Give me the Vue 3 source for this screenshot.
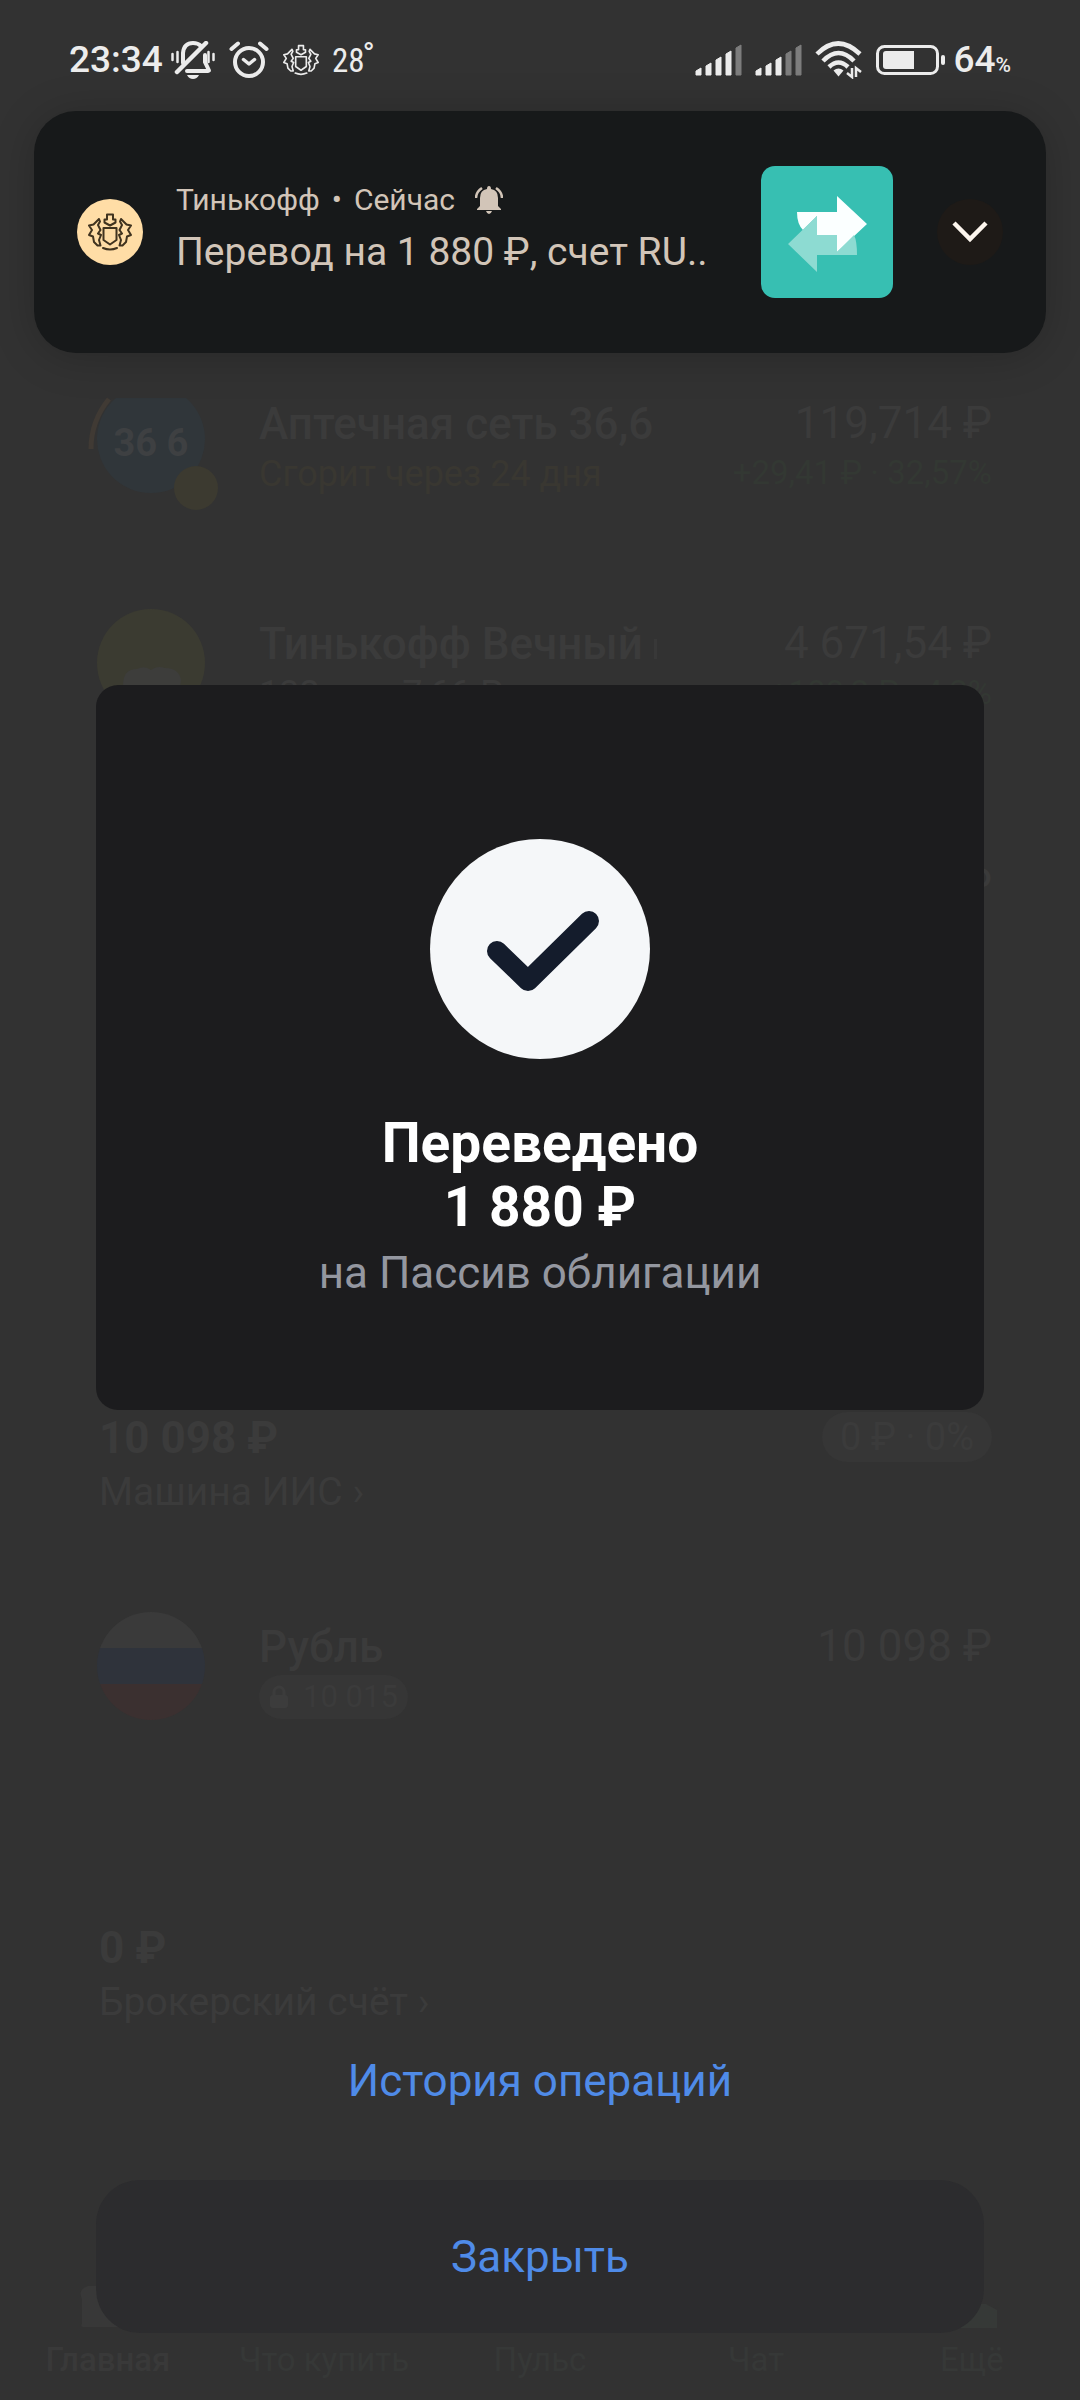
<script setup>
const tabs = ['Главная', 'Что купить', 'Пульс', 'Чат', 'Ещё']
const networks = [
  { id: 'sim1', level: 4 },
  { id: 'sim2', level: 3 },
]
const bars = [8, 13, 19, 25, 31]
</script>

<template>
  <div class="screen">
    <svg class="defs" aria-hidden="true">
      <symbol id="emblem" viewBox="0 0 44 38">
        <g fill="none" stroke="currentColor" stroke-width="2" stroke-linejoin="round" stroke-linecap="round">
          <path d="M19 1.500h6v5h2.500v3L22 12.500 16.500 9.500v-3H19z" />
          <path d="M15.500 15h13v12L22 31.500 15.500 27z" />
          <path d="M15 35q7 3 14 0" />
          <path d="M11 6L5.500 11.500 1 12.500 4 17 1 22l4 1.500L6 29l3.500 3.500h3L11 27l2-5-3-1.500 2.500-3.500L10 12l2-3.500z" />
          <path d="M33 6l5.500 5.500 4.500 1-3 4.500 3 5-4 1.500-1 5.500-3.500 3.500h-3L33 27l-2-5 3-1.500-2.500-3.500L34 12l-2-3.500z" />
        </g>
      </symbol>
    </svg>

    <main class="accounts">
      <article class="row">
        <div class="logo pharmacy">
          <svg width="124" height="108" viewBox="0 0 124 108" aria-hidden="true">
            <path d="M19 9h70a54 54 0 1 1-70 0z" fill="#30363a" />
            <path d="M12 10Q-6 32-6 60" fill="none" stroke="#403a34" stroke-width="5" />
            <circle cx="99" cy="99" r="22" fill="#3c3a30" />
          </svg>
          <span class="logo-text">36 6</span>
        </div>
        <div class="info">
          <h3>Аптечная сеть 36,6</h3>
          <p class="warn">Сгорит через 24 дня</p>
        </div>
        <div class="value">
          <p class="price">119,714 ₽</p>
          <p class="gain">+29,41 ₽ · 32,57%</p>
        </div>
      </article>

      <article class="row">
        <svg class="logo" width="108" height="108" viewBox="0 0 108 108" aria-hidden="true">
          <circle cx="54" cy="54" r="54" fill="#3b3b31" />
          <path d="M26 76q0-16 14-16 8-4 14 1 6-5 14-2 14 0 16 12 0 12-12 20l-4 14H48l-8-12q-12-6-14-17z" fill="#3d3d3b" />
        </svg>
        <div class="info">
          <h3>Тинькофф Вечный <span class="cut"></span></h3>
          <p>132 шт · 7,66 ₽</p>
        </div>
        <div class="value">
          <p class="price">4 671,54 ₽</p>
          <p class="gain">+188,2 ₽ · 4,2%</p>
        </div>
      </article>

      <p class="partial">₽</p>

      <header class="account first">
        <div>
          <h2>10 098 ₽</h2>
          <a href="#iis">Машина ИИС ›</a>
        </div>
        <span class="pill">0 ₽ · 0%</span>
      </header>

      <article class="row currency">
        <svg class="logo" width="108" height="108" viewBox="0 0 108 108" aria-hidden="true">
          <clipPath id="round"><circle cx="54" cy="54" r="54" /></clipPath>
          <g clip-path="url(#round)">
            <path d="M0 0h108v36H0z" fill="#3a3a3a" />
            <path d="M0 36h108v36H0z" fill="#2f333b" />
            <path d="M0 72h108v36H0z" fill="#3b3030" />
          </g>
        </svg>
        <div class="info">
          <h3>Рубль</h3>
          <span class="lock-pill">
            <svg width="20" height="24" viewBox="0 0 20 24" aria-hidden="true">
              <path d="M5 11V7a5 5 0 0 1 10 0v4" fill="none" stroke="#3c3c3c" stroke-width="3" />
              <rect x="1" y="10" width="18" height="13" rx="3" fill="#3c3c3c" />
            </svg>
            10 015
          </span>
        </div>
        <div class="value">
          <p class="price">10 098 ₽</p>
        </div>
      </article>

      <header class="account">
        <div>
          <h2>0 ₽</h2>
          <a href="#broker">Брокерский счёт ›</a>
        </div>
      </header>
    </main>

    <nav class="tabs">
      <a v-for="(tab, i) in tabs" :key="tab" href="#tab" :class="{ active: i === 0 }">
        <svg width="56" height="42" viewBox="0 0 56 42" aria-hidden="true">
          <path v-if="i === 0" d="M8 0h40q8 2 8 11l-5 2v25q0 3-3 3H3q-3 0-1-4V13Q-3 4 8 0z" fill="#383838" />
          <path v-if="i === 4" d="M4 42V26l14-8h24l11 6v18z" fill="#363937" />
        </svg>
        {{ tab }}
      </a>
    </nav>

    <div class="overlay">
      <header class="status">
        <div class="status-group">
          <time class="clock">23:34</time>
          <svg class="mute" width="44" height="38" viewBox="0 0 44 38" aria-hidden="true">
            <g fill="none" stroke="#ececec" stroke-linecap="round">
              <path d="M12 22V12Q13 2 22 2q5 0 8 3M34 14v7l4 8.500M16 30h21" stroke-width="4" />
              <path d="M35 2L6 31" stroke-width="4.500" />
              <path d="M1.500 13v6M6.500 11v10M37.500 11v10M42.500 13v6" stroke-width="2.500" />
            </g>
            <path d="M16 34h12q-2 4-6 4t-6-4z" fill="#ececec" />
          </svg>
          <svg class="alarm" width="40" height="38" viewBox="0 0 40 38" aria-hidden="true">
            <g fill="none" stroke="#ececec" stroke-linecap="round" stroke-linejoin="round">
              <circle cx="20" cy="21" r="14" stroke-width="4" />
              <path d="M14.500 18.500l5.500 4.500 5.500-4.500" stroke-width="3.500" />
              <path d="M2.500 8L9 2.500M37.500 8L31 2.500" stroke-width="4" />
            </g>
          </svg>
          <svg class="mini-emblem" width="36" height="32" aria-hidden="true"><use href="#emblem" /></svg>
          <span class="temp">28<span class="degree">°</span></span>
        </div>
        <div class="status-group">
          <svg v-for="n in networks" :key="n.id" class="signal" width="48" height="32" viewBox="0 0 48 32" aria-hidden="true">
            <path
              v-for="(h, i) in bars"
              :key="h"
              :d="`M${i * 10 + 1} 31v${4 - h}l5-3v${h - 1}z`"
              :fill="i < n.level ? '#ececec' : '#7d7d7d'"
              :stroke="i < n.level ? '#ececec' : '#7d7d7d'"
              stroke-linejoin="round"
            />
          </svg>
          <svg class="wifi" width="48" height="38" viewBox="0 0 48 38" aria-hidden="true">
            <g fill="none" stroke="#ececec" stroke-width="4.500">
              <path d="M2 13Q23-8 45 13" />
              <path d="M8 20Q23.500 4 39 20" />
              <path d="M14 26q9.500-9 19 0" />
            </g>
            <path d="M18.500 29.500q5-4 10 0l-5 6z" fill="#ececec" />
            <path d="M37 27v9l-5-4M41 36v-9l5 4" fill="none" stroke="#ececec" stroke-width="2.500" />
          </svg>
          <svg class="battery" width="70" height="32" viewBox="0 0 70 32" aria-hidden="true">
            <rect x="1.500" y="2.500" width="60" height="27" rx="7" fill="none" stroke="#ececec" stroke-width="3" />
            <path d="M10 7h28v18H10q-3 0-3-3V10q0-3 3-3z" fill="#ececec" />
            <rect x="65" y="11" width="4" height="10" rx="2" fill="#ececec" />
          </svg>
          <span class="clock">64<small>%</small></span>
        </div>
      </header>

      <section class="notice">
        <div class="avatar"><svg width="44" height="38" aria-hidden="true"><use href="#emblem" /></svg></div>
        <div class="notice-text">
          <p class="notice-head">
            <span>Тинькофф</span>
            <span>•</span>
            <span>Сейчас</span>
            <svg width="28" height="28" viewBox="0 0 28 28" aria-hidden="true">
              <path d="M14 0q2 0 2 3 7 1 7 9v8l3 3v1H2v-1l3-3v-8q0-8 7-9 0-3 2-3zM11 25h6q-1 3-3 3t-3-3z" fill="#d2c5b8" />
              <path d="M1 12q0-6 6-10M27 12q0-6-6-10" fill="none" stroke="#d2c5b8" stroke-width="2.500" />
            </svg>
          </p>
          <p class="notice-body">Перевод на 1 880 ₽, счет RU..</p>
        </div>
        <svg class="thumb" width="132" height="132" viewBox="0 0 132 132" aria-hidden="true">
          <rect width="132" height="132" rx="14" fill="#37bfb2" />
          <path d="M36 46h40V30l30 28-30 28V69H56V50L42 64q-6-6-6-18z" fill="#fbffff" />
          <path d="M56 50h20v19H56z" fill="#fbffff" />
          <path d="M27 78l29-28v19h20v17l17-17q3 6 3 20H56v17z" fill="#8ddbd2" />
        </svg>
        <button class="expand" type="button" aria-label="Развернуть">
          <svg width="36" height="22" viewBox="0 0 36 22" aria-hidden="true">
            <path d="M2 2l16 16L34 2" fill="none" stroke="#fdf6ee" stroke-width="4.500" />
          </svg>
        </button>
      </section>

      <section class="dialog" role="dialog" aria-labelledby="done">
        <svg width="220" height="220" viewBox="0 0 220 220" aria-hidden="true">
          <circle cx="110" cy="110" r="110" fill="#f5f7f9" />
          <path d="M67 112l31 30 61-60" fill="none" stroke="#141c2c" stroke-width="20" stroke-linecap="round" stroke-linejoin="round" />
        </svg>
        <h1 id="done">Переведено<br />1 880 ₽</h1>
        <p>на Пассив облигации</p>
      </section>

      <a class="history" href="#history">История операций</a>
      <button class="close" type="button">Закрыть</button>
    </div>
  </div>
</template>

<style>
body {
  margin: 0;
  background: #323232;
}
</style>

<style scoped>
.screen {
  position: relative;
  display: flex;
  flex-direction: column;
  min-height: 100vh;
  overflow: hidden;
  background: #323232;
  color: #3b3b3b;
  font-family: Roboto, 'Noto Sans', sans-serif;
}
.defs {
  position: absolute;
  width: 0;
  height: 0;
}
h1, h2, h3, p {
  margin: 0;
}
a {
  color: inherit;
  text-decoration: none;
}

/* Account list behind the overlay */
.accounts {
  padding: 389px 88px 0 97px;
}
.row {
  display: flex;
  gap: 54px;
  height: 108px;
  margin-bottom: 112px;
}
.logo {
  position: relative;
  flex: none;
  width: 108px;
  overflow: visible;
}
.logo svg {
  overflow: visible;
}
.logo-text {
  position: absolute;
  inset: 32px 0 auto;
  font-size: 38px;
  line-height: 44px;
  font-weight: 700;
  text-align: center;
  color: #3e4042;
}
.info {
  flex: 1;
  padding-top: 9px;
  font-size: 36px;
  line-height: 44px;
}
.info h3 {
  margin-bottom: 2px;
  font-size: 44px;
  line-height: 52px;
  font-weight: 500;
}
.cut {
  display: inline-block;
  width: 3px;
  height: 20px;
  background: #383838;
}
.warn {
  color: #393731;
}
.value {
  padding-top: 8px;
  text-align: right;
}
.price {
  font-size: 44px;
  line-height: 52px;
}
.gain {
  font-size: 33px;
  line-height: 48px;
  color: #333833;
}
.partial {
  padding-top: 30px;
  font-size: 44px;
  line-height: 52px;
  text-align: right;
}
.account {
  display: flex;
  justify-content: space-between;
  padding-left: 2px;
  font-size: 39px;
}
.first {
  margin-top: 501px;
  margin-bottom: 96px;
}
.account h2 {
  font-size: 44px;
  line-height: 52px;
  font-weight: 700;
}
.account a {
  display: block;
  margin-top: 4px;
  line-height: 48px;
}
.pill {
  align-self: flex-start;
  padding: 0 18px;
  border-radius: 26px;
  background: #363636;
  font-size: 38px;
  line-height: 50px;
}
.lock-pill {
  display: inline-flex;
  align-items: center;
  gap: 14px;
  padding: 0 10px;
  border-radius: 22px;
  background: #363636;
  font-size: 31px;
  line-height: 44px;
}
.currency {
  margin-bottom: 202px;
}
.tabs {
  display: grid;
  grid-template-columns: repeat(5, 1fr);
  margin-top: auto;
  padding-bottom: 20px;
  font-size: 33px;
  line-height: 40px;
  color: #363837;
}
.tabs a {
  display: flex;
  flex-direction: column;
  align-items: center;
  gap: 12px;
}
.tabs .active {
  font-weight: 500;
  color: #393939;
}

/* Overlay */
.overlay {
  position: absolute;
  inset: 0;
  display: flex;
  flex-direction: column;
  padding-bottom: 67px;
}
.status {
  display: flex;
  justify-content: space-between;
  height: 111px;
  padding: 0 69px;
  color: #ececec;
}
.status-group {
  display: flex;
  align-items: center;
  height: 120px;
}
.clock {
  font-size: 37px;
  line-height: 44px;
  font-weight: 500;
}
.clock small {
  font-size: 21px;
  line-height: 1;
}
.mute {
  margin-left: 8px;
}
.alarm {
  margin-left: 14px;
}
.mini-emblem {
  margin-left: 14px;
}
.temp {
  position: relative;
  margin-left: 13px;
  font-family: 'Roboto Condensed', Roboto, sans-serif;
  font-size: 33px;
}
.degree {
  position: absolute;
  left: 94%;
  top: -6px;
}
.signal {
  margin-right: 12px;
}
.battery {
  margin: 0 7px 0 13px;
}
.notice {
  display: flex;
  align-items: center;
  margin: 0 34px;
  height: 242px;
  padding: 0 43px;
  border-radius: 42px;
  box-sizing: border-box;
  background: #17191a;
  box-shadow: 0 4px 44px rgba(0, 0, 0, 0.2);
  color: #d2c5b8;
}
.avatar {
  display: grid;
  place-items: center;
  width: 66px;
  height: 66px;
  border-radius: 50%;
  background: #ffdda6;
  color: #40331f;
}
.notice-text {
  flex: 1;
  min-width: 0;
  margin-left: 33px;
  padding-bottom: 4px;
  white-space: nowrap;
}
.notice-head {
  display: flex;
  align-items: center;
  gap: 12px;
  font-size: 30px;
  line-height: 40px;
}
.notice-head svg {
  margin-left: 8px;
}
.notice-body {
  margin-top: 4px;
  font-size: 39px;
  line-height: 56px;
}
.expand {
  display: grid;
  place-items: center;
  width: 66px;
  height: 66px;
  margin-left: 44px;
  padding: 0;
  border: 0;
  border-radius: 50%;
  background: #1e1a17;
}
.dialog {
  display: flex;
  flex-direction: column;
  align-items: center;
  margin: 332px 96px 0;
  padding: 154px 24px 111px;
  border-radius: 22px;
  background: #1c1c1e;
  text-align: center;
}
.dialog h1 {
  margin: 52px 0 8px;
  font-size: 55px;
  line-height: 64px;
  font-weight: 700;
  color: #fff;
}
.dialog p {
  font-size: 44px;
  line-height: 52px;
  color: #9497a0;
}
.history {
  align-self: center;
  margin: auto 0 73px;
  font-size: 44px;
  line-height: 52px;
  color: #4f8be8;
}
.close {
  margin: 0 96px;
  padding: 0;
  height: 153px;
  border: 0;
  border-radius: 44px;
  background: #2c2c2e;
  color: #4f8be8;
  font: inherit;
  font-size: 44px;
}
</style>
